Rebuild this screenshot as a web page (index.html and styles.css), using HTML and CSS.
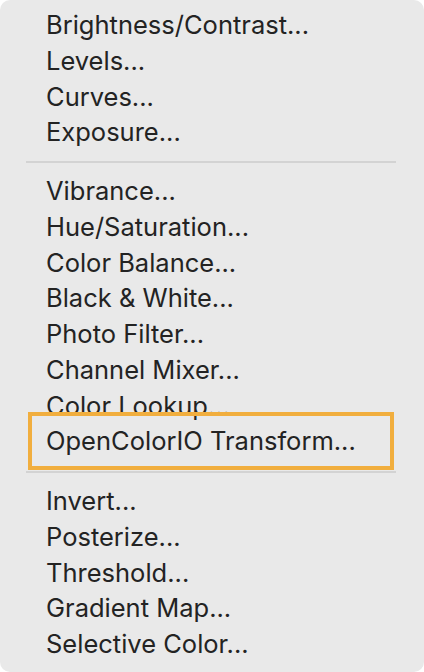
FILE: index.html
```html
<!DOCTYPE html>
<html lang="en">
<head>
<meta charset="utf-8">
<title>Adjustments menu</title>
<link rel="stylesheet" href="styles.css">
</head>
<body>
<div class="menu">
  <ul class="group g1">
    <li class="item">Brightness/Contrast...</li>
    <li class="item">Levels...</li>
    <li class="item">Curves...</li>
    <li class="item">Exposure...</li>
  </ul>
  <div class="sep sep1"></div>
  <ul class="group g2">
    <li class="item">Vibrance...</li>
    <li class="item">Hue/Saturation...</li>
    <li class="item">Color Balance...</li>
    <li class="item">Black &amp; White...</li>
    <li class="item">Photo Filter...</li>
    <li class="item">Channel Mixer...</li>
    <li class="item">Color Lookup...</li>
    <li class="item highlighted">OpenColorIO Transform...<span class="callout"></span></li>
  </ul>
  <div class="sep sep2"></div>
  <ul class="group g3">
    <li class="item">Invert...</li>
    <li class="item">Posterize...</li>
    <li class="item">Threshold...</li>
    <li class="item">Gradient Map...</li>
    <li class="item">Selective Color...</li>
  </ul>
</div>
</body>
</html>
```
FILE: styles.css
```css
html, body {
  margin: 0;
  padding: 0;
  background: #ffffff;
}
.menu {
  width: 424px;
  height: 672px;
  box-sizing: border-box;
  background: #e9e9e9;
  border-radius: 10px;
  padding-top: 7px;
  font-family: Inter, "Liberation Sans", sans-serif;
  font-size: 25.5px;
  color: #232323;
  overflow: hidden;
}
.group {
  list-style: none;
  margin: 0;
  padding: 0;
}
.item {
  height: 35.75px;
  line-height: 35.75px;
  padding-left: 46px;
  white-space: nowrap;
  position: relative;
}
.sep {
  height: 2px;
  background: #d3d3d3;
  margin-left: 26px;
  margin-right: 28px;
}
.sep1 {
  margin-top: 11px;
  margin-bottom: 10px;
}
.sep2 {
  margin-top: 12px;
  margin-bottom: 10px;
}
.callout {
  position: absolute;
  left: 28px;
  width: 366px;
  top: -11px;
  height: 58px;
  box-sizing: border-box;
  border: 4.5px solid #f1ae3e;
}
```
